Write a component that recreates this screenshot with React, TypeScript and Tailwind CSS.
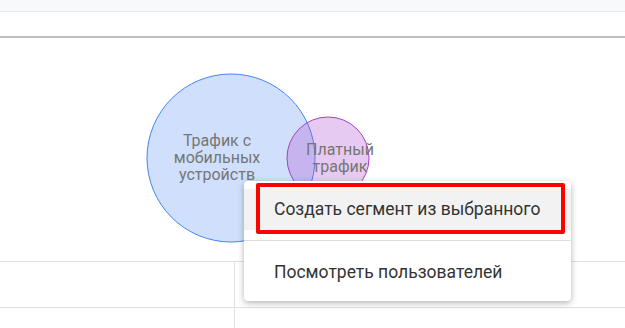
const FONT = { fontFamily: 'Roboto, "Noto Sans", sans-serif' };

function Venn() {
  return (
    <svg width="625" height="223" viewBox="0 38 625 223" className="block">
      <circle cx="231" cy="158" r="84" fill="#4285f4" fillOpacity="0.25" stroke="#4285f4" strokeWidth="1" />
      <circle cx="328" cy="158" r="41" fill="#b04fd0" fillOpacity="0.3" stroke="#a93fc8" strokeWidth="1" />
      <g fill="#767676" fontSize="16" textAnchor="middle" style={FONT}>
        <text x="217" y="146">Трафик с</text>
        <text x="217" y="163">мобильных</text>
        <text x="217" y="180">устройств</text>
        <text x="340" y="155">Платный</text>
        <text x="340" y="172">трафик</text>
      </g>
    </svg>
  );
}

export default function App() {
  return (
    <div className="relative w-[625px] h-[328px] overflow-hidden bg-white" style={FONT}>
      <div className="h-[12px] bg-[#f8f9fa] border-b border-[#e8eaed]" />
      <div className="h-[24px]" />
      <div className="h-[2px] bg-[#bdbdbd]" />
      <Venn />
      <div className="border-t border-[#e0e0e0]">
        <div className="flex h-[46px] border-b border-[#e0e0e0]">
          <div className="w-[235px] border-r border-[#e0e0e0]" />
          <div className="flex-1" />
        </div>
        <div className="flex h-[30px]">
          <div className="w-[235px] border-r border-[#e0e0e0]" />
          <div className="flex-1" />
        </div>
      </div>

      {/* context menu */}
      <div className="absolute left-[244px] top-[181px] w-[327px] h-[120px] bg-white rounded-[4px] shadow-[0_2px_6px_rgba(0,0,0,0.3)] pt-2 text-[17.5px] text-[#333]">
        <div className="h-[41px] bg-[#f2f2f2] flex items-center pl-[30px]">Создать сегмент из выбранного</div>
        <div className="h-[10px]" />
        <div className="border-t border-[#dadce0]" />
        <div className="h-[62px] flex items-center pl-[30px]">Посмотреть пользователей</div>
        <div className="absolute left-[12px] top-[2px] w-[309px] h-[51px] border-[4px] border-[#ff0000] rounded-[2px]" />
      </div>
    </div>
  );
}
